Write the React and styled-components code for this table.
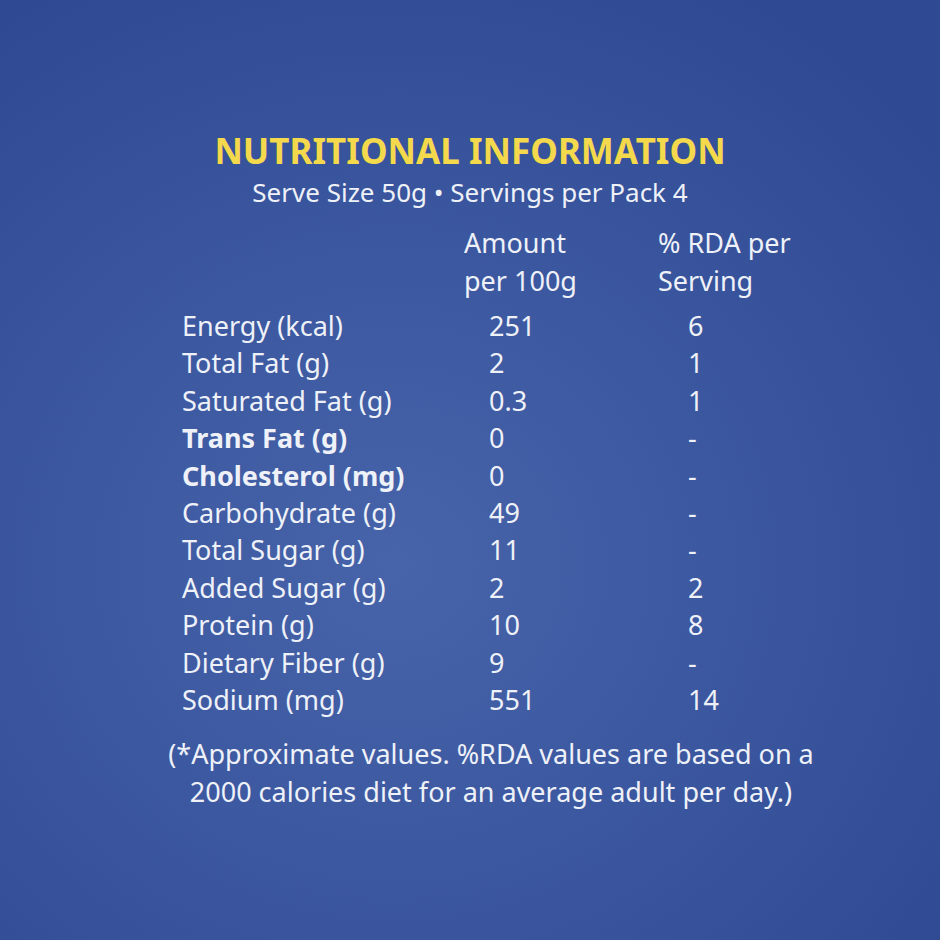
import React from "react";
import styled, { createGlobalStyle } from "styled-components";

const rows = [
  { name: "Energy (kcal)", amount: "251", rda: "6" },
  { name: "Total Fat (g)", amount: "2", rda: "1" },
  { name: "Saturated Fat (g)", amount: "0.3", rda: "1" },
  { name: "Trans Fat (g)", amount: "0", rda: "-", bold: true },
  { name: "Cholesterol (mg)", amount: "0", rda: "-", bold: true },
  { name: "Carbohydrate (g)", amount: "49", rda: "-" },
  { name: "Total Sugar (g)", amount: "11", rda: "-" },
  { name: "Added Sugar (g)", amount: "2", rda: "2" },
  { name: "Protein (g)", amount: "10", rda: "8" },
  { name: "Dietary Fiber (g)", amount: "9", rda: "-" },
  { name: "Sodium (mg)", amount: "551", rda: "14" },
];

export default function App() {
  return (
    <>
      <GlobalStyle />
      <Page>
        <Title>NUTRITIONAL INFORMATION</Title>
        <Subtitle>Serve Size 50g • Servings per Pack 4</Subtitle>
        <Table>
          <span />
          <HeadCell>
            Amount
            <br />
            per 100g
          </HeadCell>
          <HeadCell>
            % RDA per
            <br />
            Serving
          </HeadCell>
          {rows.map((row) => (
            <React.Fragment key={row.name}>
              <NameCell $bold={row.bold}>{row.name}</NameCell>
              <ValueCell $indent={25}>{row.amount}</ValueCell>
              <ValueCell $indent={30}>{row.rda}</ValueCell>
            </React.Fragment>
          ))}
        </Table>
        <Footnote>
          (*Approximate values. %RDA values are based on a
          <br />
          2000 calories diet for an average adult per day.)
        </Footnote>
      </Page>
    </>
  );
}

const GlobalStyle = createGlobalStyle`
  body {
    margin: 0;
    font-family: "Noto Sans", "Open Sans", sans-serif;
  }
`;

const Page = styled.div`
  width: 940px;
  height: 940px;
  box-sizing: border-box;
  padding-top: 131px;
  display: flex;
  flex-direction: column;
  align-items: center;
  color: #eef1f8;
  background: radial-gradient(
    ellipse 75% 70% at 42% 60%,
    #4763a9 0%,
    #3c58a0 45%,
    #2f4a92 100%
  );
`;

const Title = styled.h1`
  margin: 0;
  color: #f4d94c;
  font: 700 35px/40px "Noto Sans", sans-serif;
`;

const Subtitle = styled.div`
  margin-top: 6px;
  font: 400 26px/30px "Noto Sans", sans-serif;
`;

const Table = styled.div`
  margin-top: 17px;
  width: 576px;
  display: grid;
  grid-template-columns: 282px 194px 100px;
  font: 400 27px/37.4px "Noto Sans", sans-serif;
`;

const HeadCell = styled.div`
  line-height: 38px;
  margin-bottom: 7px;
  white-space: nowrap;
`;

const NameCell = styled.div`
  font-weight: ${(p) => (p.$bold ? 700 : 400)};
  white-space: nowrap;
`;

const ValueCell = styled.div`
  padding-left: ${(p) => p.$indent}px;
`;

const Footnote = styled.p`
  margin: 17px 0 0;
  padding-left: 42px;
  text-align: center;
  white-space: nowrap;
  font: 400 27px/38px "Noto Sans", sans-serif;
`;
